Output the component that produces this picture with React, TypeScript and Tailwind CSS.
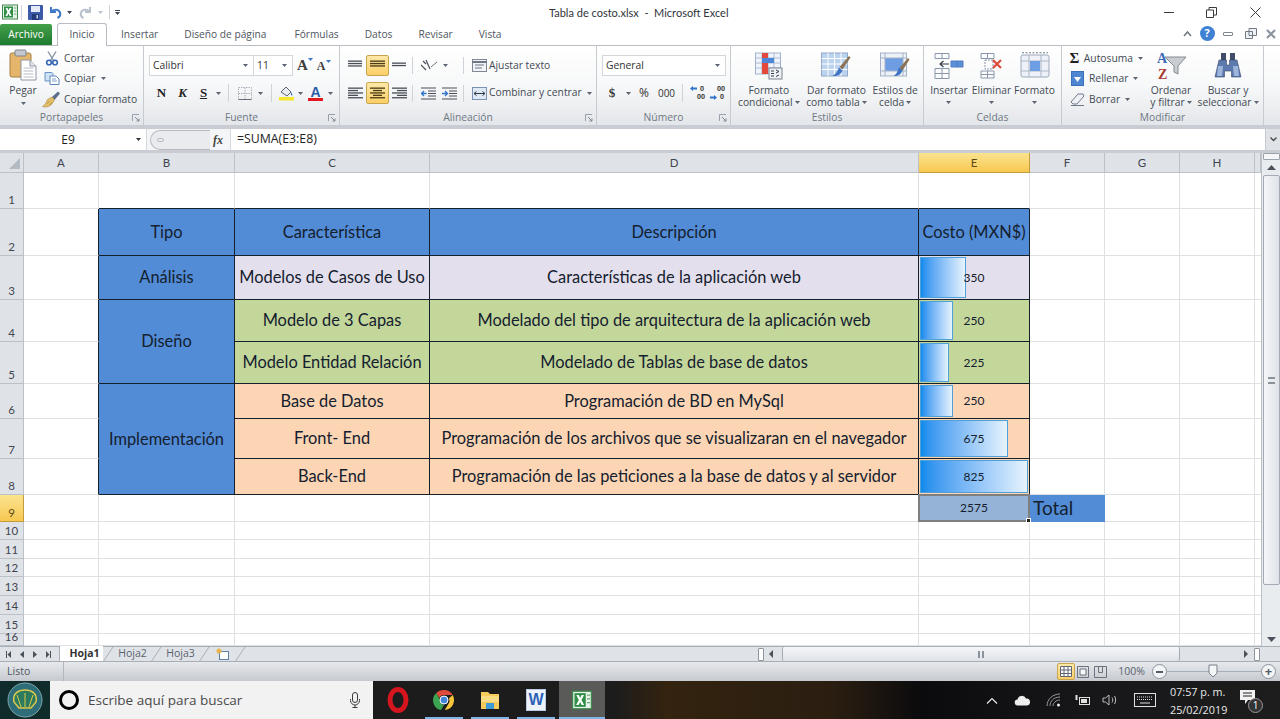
import type { ReactNode } from 'react';

const ui = "font-['Open_Sans','Noto_Sans',sans-serif]";
const sheet = "font-['Lato','Open_Sans',sans-serif]";

function Caret({ className = 'fill-[#5b6470]' }: { className?: string }) {
  return (
    <svg width="5" height="3" viewBox="0 0 5 3" className={`${className} shrink-0`}>
      <path d="M0 0h5L2.500 3z" />
    </svg>
  );
}

function ExcelIcon({ size = 16 }: { size?: number }) {
  return (
    <svg width={size} height={size} viewBox="0 0 16 16">
      <rect x="0.500" y="1" width="15" height="14" fill="#e8f3ea" stroke="#3f8a4d" />
      <rect x="2" y="2.500" width="9" height="11" fill="#2f8f46" />
      <path d="M3.500 4h2l1 2.300L7.600 4h2L7.600 8l2.100 4h-2L6.500 9.600 5.300 12h-2l2.100-4z" fill="#fff" />
      <path d="M12 4h2.500M12 7h2.500M12 10h2.500" stroke="#69ac78" />
    </svg>
  );
}

function LinesIcon({ lines, active = false }: { lines: [number, number][]; active?: boolean }) {
  return (
    <svg width="15" height="12" viewBox="0 0 15 12">
      {lines.map(([x, w], i) => (
        <rect key={i} x={x} y={i * 2.4 + 0.5} width={w} height="1.300" fill={active ? '#4a3a16' : '#4a4f57'} />
      ))}
    </svg>
  );
}

function IndentIcon({ flip = false }: { flip?: boolean }) {
  return (
    <svg width="15" height="13" viewBox="0 0 15 13" fill="none">
      <path d="M0 1h15M7 4h8M7 6.500h8M7 9h8M0 12h15" stroke="#4a4f57" strokeWidth="1.200" />
      <path d={flip ? 'M0 6.500h5M3 4l2.500 2.500L3 9' : 'M5.500 6.500h-5M3 4L.5 6.500 3 9'} stroke="#2f74c9" strokeWidth="1.300" />
    </svg>
  );
}

function ActiveBox({ children, className = '' }: { children: ReactNode; className?: string }) {
  return (
    <div className={`flex items-center justify-center rounded-[2px] border border-[#c9a552] bg-gradient-to-b from-[#fde8a6] to-[#fbcf66] ${className}`}>
      {children}
    </div>
  );
}

function ScissorsIcon() {
  return (
    <svg width="14" height="15" viewBox="0 0 14 15" fill="none">
      <path d="M3 0.500l5.500 9M11 0.500L5.500 9.500" stroke="#8a94a3" strokeWidth="1.400" />
      <circle cx="4" cy="11.500" r="2.300" stroke="#3565b5" strokeWidth="1.600" />
      <circle cx="10" cy="11.500" r="2.300" stroke="#3565b5" strokeWidth="1.600" />
    </svg>
  );
}

function CopyIcon() {
  return (
    <svg width="16" height="13" viewBox="0 0 16 13">
      <path d="M1 .5h7l1 1V9H1z" fill="#cfe2f6" stroke="#6b94c4" />
      <path d="M6 4h6l3 3v5.500H6z" fill="#fff" stroke="#5c86bb" />
      <path d="M8 7h4M8 9h5" stroke="#7ea5d0" />
    </svg>
  );
}

function BrushIcon() {
  return (
    <svg width="19" height="17" viewBox="0 0 19 17">
      <path d="M10 6l6-5.500 2 2L12.500 9z" fill="#5b6f8d" />
      <path d="M10 6l2.500 3-3 4.500C7 16 3 16.500.5 15.500 3 14 4.500 11 5.500 8.500z" fill="#e5c06a" stroke="#a98637" strokeWidth=".6" />
      <path d="M5 13l2.500-3M8 14l2-3" stroke="#a98637" strokeWidth=".7" />
    </svg>
  );
}

function PasteIcon() {
  return (
    <svg width="28" height="32" viewBox="0 0 28 32">
      <rect x="1" y="4" width="21" height="24" rx="2" fill="#e4b56a" stroke="#a57e42" />
      <rect x="6" y="1" width="11" height="6" rx="1" fill="#c5c9cf" stroke="#7f858d" />
      <path d="M12 11h9l6 6v14H12z" fill="#fff" stroke="#8d97a5" />
      <path d="M21 11v6h6" fill="#e5e9ee" stroke="#8d97a5" />
      <path d="M14.500 19h10M14.500 22h10M14.500 25h10M14.500 28h10" stroke="#b6bdc8" />
    </svg>
  );
}

function CondFormatIcon() {
  return (
    <svg width="28" height="28" viewBox="0 0 28 28">
      <rect x="0.500" y="1" width="25" height="21" fill="#f1f5fb" stroke="#9fb3cc" />
      <path d="M.5 6h25M.5 11h25M.5 16h25M7 1v21M13 1v21M19 1v21" stroke="#a9bcd4" />
      <rect x="7" y="1" width="6" height="21" fill="#e2493c" />
      <rect x="7" y="6" width="12" height="5" fill="#4d86d8" />
      <rect x="14" y="16" width="13" height="11" fill="#eef1f5" stroke="#7c8492" />
      <path d="M16 19h3M16 21.500h3M16 24h3M21 18l3 1.500-3 1.500M24 23l-3 1.500" stroke="#333a46" fill="none" />
    </svg>
  );
}

function TableFormatIcon() {
  return (
    <svg width="30" height="28" viewBox="0 0 30 28">
      <rect x="0.500" y="1" width="26" height="23" fill="#bcd3f0" stroke="#8fa8c8" />
      <path d="M.5 6.500h26M.5 12h26M.5 17.500h26M7 1v23M13.500 1v23M20 1v23" stroke="#fff" />
      <path d="M28 4l1.500 1.500-8 12-3-2.500z" fill="#8b7355" />
      <path d="M18 15.500l3.500 3c-1.500 4-6 6-10 5.500 3-1.500 5-4.500 6.500-8.500z" fill="#3f74c4" />
    </svg>
  );
}

function CellStyleIcon() {
  return (
    <svg width="30" height="28" viewBox="0 0 30 28">
      <rect x="0.500" y="1" width="26" height="23" fill="#eef2f7" stroke="#a3b2c6" />
      <rect x="5" y="6" width="18" height="13" fill="#6f9de4" />
      <path d="M.5 6h26M.5 19h26M5 1v23M23 1v23" stroke="#a3b2c6" />
      <path d="M28 6l1.500 1.500-7 11-3-2.500z" fill="#8b7355" />
      <path d="M19 15.500l3.500 3c-1.500 4-5 6-9 5.500 3-1.500 4-4.500 5.500-8.500z" fill="#3f74c4" />
    </svg>
  );
}

function InsertIcon() {
  return (
    <svg width="30" height="26" viewBox="0 0 30 26" fill="none">
      <path d="M1 .5h14v5H1zM8 .5v5M1 15.500h14v10H1zM8 15.500v10M1 20.500h14" stroke="#8b98a9" fill="#fbfcfd" />
      <path d="M17 8h12v6H17zM23 8v6" fill="#5d8fd9" stroke="#4c7cc2" />
      <path d="M15 11H6M9.500 8L6 11l3.500 3" stroke="#2f3844" strokeWidth="1.100" />
    </svg>
  );
}

function DeleteIcon() {
  return (
    <svg width="24" height="26" viewBox="0 0 24 26" fill="none">
      <path d="M1 .5h13v5H1zM7.500 .5v5M1 18h13v7H1zM7.500 18v7M1 21.500h13" stroke="#8b98a9" fill="#fbfcfd" />
      <path d="M5 7h8v9H5z" stroke="#8b98a9" strokeDasharray="2 1" />
      <path d="M13 7l8 8M21 7l-8 8" stroke="#e04a3c" strokeWidth="2.200" />
    </svg>
  );
}

function FormatIcon() {
  return (
    <svg width="30" height="27" viewBox="0 0 30 27">
      <rect x="1" y="3" width="28" height="22" rx="2" fill="#eef2f8" stroke="#9aa8ba" />
      <path d="M9 3v22M21 3v22M1 9h28M1 19h28" stroke="#a9b6c7" />
      <rect x="10" y="9" width="10" height="10" fill="#6d9de3" />
      <path d="M2 .800h26" stroke="#6f7885" strokeDasharray="2 1.500" />
    </svg>
  );
}

function SortIcon() {
  return (
    <svg width="31" height="32" viewBox="0 0 31 32">
      <path d="M9 7l21 0-8 9v8l-4-2v-6z" fill="#c9ccd1" stroke="#858a92" />
      <text x="1" y="12.500" fontSize="14" fontWeight="700" fontFamily="Liberation Serif" fill="#3b6ab5">A</text>
      <text x="2" y="28.500" fontSize="14" fontWeight="700" fontFamily="Liberation Serif" fill="#a83a30">Z</text>
    </svg>
  );
}

function BinocularsIcon() {
  return (
    <svg width="28" height="26" viewBox="0 0 28 26">
      <path d="M7 0h5v8H7zM16 0h5v8h-5z" fill="#3e4e69" />
      <path d="M5 7h7.500v5h3V7H23l4 17h-9.500v-6h-7v6H1z" fill="#5d79ad" stroke="#37476a" strokeWidth=".6" />
      <path d="M4 13h5l-1 10H3zM19 13h5l1 10h-5z" fill="#9db5dc" />
    </svg>
  );
}

function SmallBtn({ icon, label, caret = false, iconBox = 'w-[19px]' }: { icon: ReactNode; label: string; caret?: boolean; iconBox?: string }) {
  return (
    <div className="flex h-[20.500px] items-center">
      <span className={`flex justify-center ${iconBox}`}>{icon}</span>
      <span className="ml-[3px] whitespace-nowrap">{label}</span>
      {caret && <span className="ml-[5px]"><Caret /></span>}
    </div>
  );
}

function BigBtn({ icon, lines, width, caretLine = false }: { icon: ReactNode; lines: string[]; width: string; caretLine?: boolean }) {
  return (
    <div className={`flex flex-col items-center ${width}`}>
      <div className="flex h-[35px] items-center justify-center">{icon}</div>
      <div className="mt-[1px] whitespace-nowrap text-center leading-[12px]">
        {lines.map((l, i) => (
          <div key={l} className="flex h-[12px] items-center justify-center gap-[2px]">
            <span>{l}</span>
            {caretLine && i === lines.length - 1 && <Caret />}
          </div>
        ))}
        {lines.length === 1 && (
          <div className="flex h-[12px] items-center justify-center"><Caret /></div>
        )}
      </div>
    </div>
  );
}

function Launcher() {
  return (
    <svg width="8" height="8" viewBox="0 0 8 8" fill="none" className="shrink-0">
      <path d="M.5 7V.5H7" stroke="#98a1ad" />
      <path d="M3 3l4 4M4.500 7H7V4.500" stroke="#7d8794" />
    </svg>
  );
}

function Group({ label, width, launcher = false, children }: { label: string; width: string; launcher?: boolean; children: ReactNode }) {
  return (
    <div className={`flex h-full shrink-0 flex-col border-r border-[#c6cbd2] ${width}`}>
      <div className="h-[65px]">{children}</div>
      <div className="relative flex h-[14px] items-center justify-center text-[#6f7883]">
        {label}
        {launcher && <span className="absolute right-[3px] top-[3px] flex"><Launcher /></span>}
      </div>
    </div>
  );
}

function Sep({ className = 'h-[16px]' }: { className?: string }) {
  return <span className={`w-px bg-[#cfd3d9] ${className}`} />;
}

function TitleBar() {
  return (
    <div className="relative flex h-[24px] items-center bg-white pl-[2px]">
      <ExcelIcon />
      <Sep className="ml-[3px] h-[15px]" />
      <svg width="15" height="15" viewBox="0 0 15 15" className="ml-[6px]">
        <rect width="15" height="15" rx="1" fill="#3d5aa8" />
        <rect x="3" y="1" width="9" height="6" fill="#e4ebf7" />
        <rect x="4" y="9" width="7" height="6" fill="#223a7a" />
        <rect x="8.500" y="10" width="1.500" height="3.500" fill="#cbd5ea" />
      </svg>
      <svg width="13" height="13" viewBox="0 0 13 13" className="ml-[6px]" fill="none">
        <path d="M2 1v5h5" stroke="#3f78c6" strokeWidth="2" />
        <path d="M2.500 5.500C5 3 9.500 3 11 6.500c.8 2.500-.5 4.500-2.500 5.500" stroke="#3f78c6" strokeWidth="2" />
      </svg>
      <span className="ml-[5px]"><Caret className="fill-[#3d4550]" /></span>
      <svg width="13" height="13" viewBox="0 0 13 13" className="ml-[7px]" fill="none">
        <path d="M11 1v5H6" stroke="#b9c1cb" strokeWidth="2" />
        <path d="M10.500 5.500C8 3 3.500 3 2 6.500c-.8 2.500.5 4.500 2.500 5.500" stroke="#b9c1cb" strokeWidth="2" />
      </svg>
      <span className="ml-[6px]"><Caret className="fill-[#b9c1cb]" /></span>
      <Sep className="ml-[6px] h-[14px] bg-[#8d939b]" />
      <span className="ml-[5px] flex flex-col gap-[1px]">
        <span className="h-px w-[5px] bg-[#3d4550]" />
        <Caret className="fill-[#3d4550]" />
      </span>
      <div className={`absolute left-[549px] top-[5px] whitespace-nowrap text-[11px] text-[#30343a] ${sheet}`}>
        Tabla de costo.xlsx&nbsp; -&nbsp; Microsoft Excel
      </div>
      <div className="ml-auto flex items-center">
        <span className="h-px w-[10px] bg-[#3a3a3a]" />
        <svg width="11" height="11" viewBox="0 0 11 11" fill="none" className="ml-[32px]">
          <path d="M.5 3h7v7.500h-7zM3 3V.5h7.500V8H8" stroke="#3a3a3a" />
        </svg>
        <svg width="11" height="11" viewBox="0 0 11 11" fill="none" className="ml-[33px] mr-[19px]">
          <path d="M.5.5l10 10M10.500.5l-10 10" stroke="#3a3a3a" />
        </svg>
      </div>
    </div>
  );
}

function TabsRow() {
  const tabs: [string, string][] = [
    ['Insertar', 'ml-[14px]'],
    ['Diseño de página', 'ml-[26px]'],
    ['Fórmulas', 'ml-[28px]'],
    ['Datos', 'ml-[26px]'],
    ['Revisar', 'ml-[26px]'],
    ['Vista', 'ml-[26px]'],
  ];
  return (
    <div className={`flex h-[22px] items-end border-b border-[#b8bdc4] bg-white text-[10.200px] text-[#4e5560] ${ui}`}>
      <div className="flex h-[21px] w-[52px] items-center justify-center rounded-t-[2px] bg-gradient-to-b from-[#45a04a] to-[#1c7a30] text-white">Archivo</div>
      <div className="z-10 ml-[5px] -mb-px flex h-[23px] w-[50px] items-center justify-center rounded-t-[3px] border border-b-0 border-[#b8bdc4] bg-white">Inicio</div>
      {tabs.map(([t, m]) => (
        <span key={t} className={`${m} h-[19px] leading-[16px] whitespace-nowrap`}>{t}</span>
      ))}
      <div className="ml-auto mb-[4px] flex items-center">
        <svg width="9" height="7" viewBox="0 0 9 7" fill="none"><path d="M1 6l3.500-4L8 6" stroke="#6f7883" strokeWidth="1.500" /></svg>
        <span className="ml-[8px] flex h-[15px] w-[15px] items-center justify-center rounded-full bg-[#3f82d4] text-[11px] font-bold text-white">?</span>
        <span className="ml-[8.500px] h-[4px] w-[10px] rounded-[1px] border border-[#7d8692]" />
        <svg width="12" height="11" viewBox="0 0 12 11" fill="#eef1f5" stroke="#6f7883" className="ml-[12px]">
          <path d="M4 .5h7.500v7H4zM.5 3.500h7v7h-7z" />
        </svg>
        <svg width="10" height="10" viewBox="0 0 10 10" fill="none" className="ml-[9px] mr-[4px]">
          <path d="M1 1l8 8M9 1L1 9" stroke="#8c949f" strokeWidth="2.200" />
        </svg>
      </div>
    </div>
  );
}

function Combo({ text, width }: { text: string; width: string }) {
  return (
    <div className={`flex h-[21px] items-center justify-between border border-[#d3d7dc] bg-white pl-[3px] pr-[5px] text-[#333] ${width}`}>
      <span>{text}</span>
      <Caret />
    </div>
  );
}

function DecimalIcon({ top, bottom, arrowRow, topPad, bottomPad }: { top: string; bottom: string; arrowRow: 'top' | 'bottom'; topPad: string; bottomPad: string }) {
  return (
    <span className="relative flex h-[16px] w-[17px] flex-col text-[7px] font-bold leading-[8px] text-[#444]">
      <span className={topPad}>{top}</span>
      <span className={bottomPad}>{bottom}</span>
      <svg width="7" height="5" viewBox="0 0 7 5" className={`absolute left-0 ${arrowRow === 'top' ? 'top-[1px]' : 'bottom-[1px]'}`}>
        <path d={arrowRow === 'top' ? 'M0 2.500L3 0v1.500h4v2H3V5z' : 'M7 2.500L4 0v1.500H0v2h4V5z'} fill="#2f74c9" />
      </svg>
    </span>
  );
}

function Ribbon() {
  return (
    <div className={`flex h-[79px] bg-gradient-to-b from-[#ffffff] via-[#f7f8f9] to-[#e3e6ea] text-[10.300px] text-[#434a54] ${ui}`}>
      <Group label="Portapapeles" width="w-[144px]" launcher>
        <div className="flex pt-[3px]">
          <div className="-mr-[4px] flex w-[46px] flex-col items-center">
            <PasteIcon />
            <span className="mt-[3px] leading-[12px]">Pegar</span>
            <span className="mt-[6px]"><Caret /></span>
          </div>
          <div className="-mt-px">
            <SmallBtn icon={<ScissorsIcon />} label="Cortar" />
            <SmallBtn icon={<CopyIcon />} label="Copiar" caret />
            <SmallBtn icon={<BrushIcon />} label="Copiar formato" />
          </div>
        </div>
      </Group>

      <Group label="Fuente" width="w-[196px]" launcher>
        <div className="pl-[5px] pt-[9px]">
          <div className="flex items-center">
            <Combo text="Calibri" width="w-[105px]" />
            <Combo text="11" width="w-[40px] -ml-px" />
            <span className="ml-[4px] flex text-[15px] font-bold leading-none text-[#3d3d3d] font-['Liberation_Serif',serif]">A<Caret className="fill-[#3f78c6]" /></span>
            <span className="ml-[4px] flex text-[12px] font-bold leading-none text-[#3d3d3d] font-['Liberation_Serif',serif]">A<Caret className="fill-[#3f78c6]" /></span>
          </div>
          <div className="mt-[6px] flex h-[22px] items-center pl-[2px] text-[13px] font-bold text-[#222] font-['Liberation_Serif',serif]">
            <span className="w-[21px] text-center">N</span>
            <span className="w-[21px] text-center italic">K</span>
            <span className="w-[21px] text-center underline">S</span>
            <span className="ml-[2px]"><Caret /></span>
            <Sep className="ml-[7px] h-[18px]" />
            <svg width="14" height="13" viewBox="0 0 14 13" fill="none" className="ml-[9px]">
              <path d="M.5.5h13v12H.5zM7 .5v12M.5 6.500h13" stroke="#a9b0b9" strokeDasharray="1.500 1" />
              <path d="M.5 12.500h13" stroke="#68707c" />
            </svg>
            <span className="ml-[6px]"><Caret /></span>
            <Sep className="ml-[8px] h-[18px]" />
            <svg width="16" height="16" viewBox="0 0 16 16" className="ml-[7px]">
              <path d="M2 7l5-5 5 5-4 4z" fill="#e9edf2" stroke="#5d6672" />
              <path d="M12 7c1 1.500 2 3 1 3.500S11.500 9 12 7z" fill="#3f78c6" />
              <rect y="12" width="15" height="3.500" fill="#f7e62e" />
            </svg>
            <span className="ml-[3px]"><Caret /></span>
            <span className="ml-[5px] flex w-[15px] flex-col items-center">
              <span className="text-[14px] leading-[12px] text-[#2d5da8] font-['Liberation_Sans',sans-serif]">A</span>
              <span className="h-[3px] w-[15px] bg-[#e3181f]" />
            </span>
            <span className="ml-[5px]"><Caret /></span>
          </div>
        </div>
      </Group>

      <Group label="Alineación" width="w-[257px]" launcher>
        <div className="pl-[8px] pt-[9px]">
          <div className="flex h-[21px] items-center">
            <LinesIcon lines={[[0, 14], [0, 14], [0, 14]]} />
            <ActiveBox className="ml-[3px] h-[21px] w-[23px]"><LinesIcon active lines={[[0, 15], [0, 15], [0, 15]]} /></ActiveBox>
            <span className="ml-[3px] mt-[5px] flex"><LinesIcon lines={[[0, 14], [0, 14]]} /></span>
            <Sep className="ml-[5px] h-[17px]" />
            <svg width="21" height="14" viewBox="0 0 21 14" fill="none" className="ml-[8px]">
              <path d="M2 2l3 3M0 6l5 5M5 1l4 9" stroke="#4a4f57" strokeWidth="1.200" />
              <path d="M10 8l6-5" stroke="#6b7480" />
            </svg>
            <span className="ml-[1px]"><Caret /></span>
            <Sep className="ml-[15px] h-[17px]" />
            <svg width="15" height="13" viewBox="0 0 15 13" fill="none" className="ml-[8px]">
              <rect x=".5" y=".5" width="14" height="12" fill="#f2f4f7" stroke="#7f8894" />
              <path d="M.5 3h14" stroke="#6c7683" strokeWidth="2" />
              <path d="M3 6h9M3 9h7" stroke="#6c7683" />
            </svg>
            <span className="ml-[2px] whitespace-nowrap">Ajustar texto</span>
          </div>
          <div className="mt-[6px] flex h-[22px] items-center">
            <LinesIcon lines={[[0, 15], [0, 10], [0, 15], [0, 10], [0, 15]]} />
            <ActiveBox className="ml-[3px] h-[22px] w-[23px]"><LinesIcon active lines={[[0, 15], [3, 9], [0, 15], [3, 9], [0, 15]]} /></ActiveBox>
            <span className="ml-[3px] flex"><LinesIcon lines={[[0, 15], [5, 10], [0, 15], [5, 10], [0, 15]]} /></span>
            <Sep className="ml-[5px] h-[17px]" />
            <span className="ml-[8px] flex"><IndentIcon /></span>
            <span className="ml-[6px] flex"><IndentIcon flip /></span>
            <Sep className="ml-[6px] h-[17px]" />
            <svg width="15" height="13" viewBox="0 0 15 13" fill="none" className="ml-[8px]">
              <rect x=".5" y=".5" width="14" height="12" fill="#dfe9f6" stroke="#7b93b3" />
              <path d="M2 6.500h11M4.500 4.500l-2.500 2 2.500 2M10.500 4.500l2.500 2-2.500 2" stroke="#2f3844" />
            </svg>
            <span className="ml-[2px] whitespace-nowrap">Combinar y centrar</span>
            <span className="ml-[5px]"><Caret /></span>
          </div>
        </div>
      </Group>

      <Group label="Número" width="w-[134px]" launcher>
        <div className="pl-[5px] pt-[9px]">
          <Combo text="General" width="w-[124px]" />
          <div className="mt-[6px] flex h-[22px] items-center text-[#333]">
            <span className="ml-[4px] w-[12px] text-center text-[13px] font-bold font-['Liberation_Serif',serif]">$</span>
            <span className="ml-[8px]"><Caret /></span>
            <span className="ml-[8px] text-[12px]">%</span>
            <span className="ml-[9px] text-[10px]">000</span>
            <Sep className="ml-[7px] h-[18px]" />
            <span className="ml-[7px] flex"><DecimalIcon top="0" bottom="00" arrowRow="top" topPad="pl-[10px]" bottomPad="pl-[7px]" /></span>
            <span className="ml-[3px] flex"><DecimalIcon top="00" bottom="0" arrowRow="bottom" topPad="pl-[7px]" bottomPad="pl-[10px]" /></span>
          </div>
        </div>
      </Group>

      <Group label="Estilos" width="w-[193px]">
        <div className="flex pl-[1px] pt-[2px]">
          <BigBtn width="w-[74px]" icon={<CondFormatIcon />} lines={['Formato', 'condicional']} caretLine />
          <BigBtn width="w-[62px]" icon={<TableFormatIcon />} lines={['Dar formato', 'como tabla']} caretLine />
          <BigBtn width="w-[56px]" icon={<CellStyleIcon />} lines={['Estilos de', 'celda']} caretLine />
        </div>
      </Group>

      <Group label="Celdas" width="w-[138px]">
        <div className="flex pl-[3px] pt-[2px]">
          <BigBtn width="w-[44px]" icon={<InsertIcon />} lines={['Insertar']} />
          <BigBtn width="w-[41px]" icon={<DeleteIcon />} lines={['Eliminar']} />
          <BigBtn width="w-[45px]" icon={<FormatIcon />} lines={['Formato']} />
        </div>
      </Group>

      <Group label="Modificar" width="w-[202px]">
        <div className="flex pl-[6px] pt-[2px]">
          <div className="w-[75px]">
            <SmallBtn iconBox="w-[18px]" icon={<span className="text-[15px] font-bold leading-none text-[#222] font-['Liberation_Serif',serif]">Σ</span>} label="Autosuma" caret />
            <SmallBtn iconBox="w-[18px]" icon={<svg width="13" height="15" viewBox="0 0 13 15"><rect x=".5" y=".5" width="12" height="14" fill="#4f86d1" stroke="#3b6fb7" /><path d="M3 6h7l-3.500 5z" fill="#fff" /></svg>} label="Rellenar" caret />
            <SmallBtn iconBox="w-[18px]" icon={<svg width="15" height="13" viewBox="0 0 15 13"><path d="M1 9l7-8h5l1 2-7 8H3z" fill="#eef1f6" stroke="#6f7b8b" /><path d="M1 12.500h13" stroke="#6f7b8b" /></svg>} label="Borrar" caret />
          </div>
          <BigBtn width="w-[56px]" icon={<SortIcon />} lines={['Ordenar', 'y filtrar']} caretLine />
          <BigBtn width="w-[58px]" icon={<BinocularsIcon />} lines={['Buscar y', 'seleccionar']} caretLine />
        </div>
      </Group>
    </div>
  );
}

function FormulaBar() {
  return (
    <div className={`flex h-[28px] border-b-[3px] border-t-[4px] border-[#c9cdd3] bg-[#fbfbfc] text-[#222] ${ui}`}>
      <div className="flex w-[147px] items-center border-r border-[#d5d8dd] bg-white">
        <span className="flex-1 text-center text-[12px]">E9</span>
        <span className="mr-[5px]"><Caret className="fill-[#333]" /></span>
      </div>
      <div className="flex w-[83px] items-center bg-[#f4f5f7] pl-[3px]">
        <div className="flex h-[20px] w-[60px] items-center rounded-l-full border border-r-0 border-[#b7bcc3] bg-[#e9ebee] pl-[6px]">
          <span className="h-[4px] w-[7px] rounded-full border border-[#b7bcc3]" />
        </div>
        <span className="ml-[3px] text-[12px] font-bold italic text-[#444] font-['Liberation_Serif',serif]">fx</span>
      </div>
      <div className="flex flex-1 items-center border-l border-[#d5d8dd] bg-white pl-[6px] text-[12.300px]">=SUMA(E3:E8)</div>
      <div className="flex w-[15px] items-center justify-center border-l border-[#c6cad0] bg-[#dfe3e8]">
        <svg width="7" height="5" viewBox="0 0 7 5" fill="none"><path d="M.5.5l3 3 3-3" stroke="#444" strokeWidth="1.300" /></svg>
      </div>
    </div>
  );
}

function ColHead({ label, active = false }: { label?: string; active?: boolean }) {
  return (
    <div className={`flex items-center justify-center border-b border-r text-[11.500px] ${active ? 'border-[#c59c3d] bg-gradient-to-b from-[#fbe38e] to-[#f8c84f] text-[#5c4a18]' : 'border-[#bcc1c8] bg-[#dfe3e8] text-[#3f4650]'}`}>
      {label}
    </div>
  );
}

function RowHead({ n, active = false }: { n: number; active?: boolean }) {
  return (
    <div className={`flex items-end justify-center border-b border-r text-[11.500px] leading-[16px] ${active ? 'border-[#c59c3d] bg-gradient-to-b from-[#fbe38e] to-[#f8c84f] text-[#5c4a18]' : 'border-[#bcc1c8] bg-[#dfe3e8] text-[#3f4650]'}`}>
      {n}
    </div>
  );
}

function Blank({ className = '' }: { className?: string }) {
  return <div className={`border-b border-r border-[#dfe0e3] ${className}`} />;
}

function Cell({ text, bg, className = '' }: { text: string; bg: string; className?: string }) {
  return (
    <div className={`flex items-center justify-center whitespace-nowrap border-b border-r border-[#16202b] text-[16.400px] text-[#14202e] ${bg} ${className}`}>
      {text}
    </div>
  );
}

function CostCell({ value, bar, bg }: { value: number; bar: number; bg: string }) {
  return (
    <div className={`relative flex items-center justify-center border-b border-r border-[#16202b] text-[12px] text-[#14202e] ${bg}`}>
      <div
        className="absolute bottom-[1px] left-[1px] top-[1px] border border-[#4f9fd8] bg-gradient-to-r from-[#0a8bed] to-[#e6f3fc]"
        style={{ width: bar }}
      />
      <span className="relative">{value}</span>
    </div>
  );
}

function Filler({ from = 'F' }: { from?: 'F' | 'G' }) {
  return (
    <>
      {from === 'F' && <Blank />}
      <Blank />
      <Blank />
      <Blank className="border-r-0" />
    </>
  );
}

const BLUE = 'bg-[#538cd6]';
const LILAC = 'bg-[#e4dfec]';
const GREEN = 'bg-[#c4d79b]';
const PEACH = 'bg-[#fcd5b4]';

function Sheet() {
  const edge = 'border-r-[#16202b]';
  const topEdge = 'border-b-[#16202b]';
  return (
    <div className={`grid h-[493px] flex-1 grid-cols-[24px_75px_136px_195px_489px_111px_75px_75px_75px_6px] grid-rows-[20px_36px_47px_44px_42px_42px_35px_40px_36px_27px_18px_19px_18px_19px_19px_19px_12px] overflow-hidden bg-white ${sheet}`}>
      <div className="flex items-end justify-end border-b border-r border-[#bcc1c8] bg-[#dfe3e8] p-[3px]">
        <span className="h-0 w-0 border-b-[11px] border-l-[11px] border-b-[#b4bac2] border-l-transparent" />
      </div>
      {['A', 'B', 'C', 'D'].map((c) => <ColHead key={c} label={c} />)}
      <ColHead label="E" active />
      {['F', 'G', 'H'].map((c) => <ColHead key={c} label={c} />)}
      <ColHead />

      <RowHead n={1} />
      <Blank />
      <Blank className={topEdge} />
      <Blank className={topEdge} />
      <Blank className={topEdge} />
      <Blank className={topEdge} />
      <Filler />

      <RowHead n={2} />
      <Blank className={edge} />
      <Cell text="Tipo" bg={BLUE} />
      <Cell text="Característica" bg={BLUE} />
      <Cell text="Descripción" bg={BLUE} />
      <Cell text="Costo (MXN$)" bg={BLUE} />
      <Filler />

      <RowHead n={3} />
      <Blank className={edge} />
      <Cell text="Análisis" bg={BLUE} />
      <Cell text="Modelos de Casos de Uso" bg={LILAC} />
      <Cell text="Características de la aplicación web" bg={LILAC} />
      <CostCell value={350} bar={46} bg={LILAC} />
      <Filler />

      <RowHead n={4} />
      <Blank className={edge} />
      <Cell text="Diseño" bg={BLUE} className="row-span-2" />
      <Cell text="Modelo de 3 Capas" bg={GREEN} />
      <Cell text="Modelado del tipo de arquitectura de la aplicación web" bg={GREEN} />
      <CostCell value={250} bar={33} bg={GREEN} />
      <Filler />

      <RowHead n={5} />
      <Blank className={edge} />
      <Cell text="Modelo Entidad Relación" bg={GREEN} />
      <Cell text="Modelado de Tablas de base de datos" bg={GREEN} />
      <CostCell value={225} bar={29} bg={GREEN} />
      <Filler />

      <RowHead n={6} />
      <Blank className={edge} />
      <Cell text="Implementación" bg={BLUE} className="row-span-3" />
      <Cell text="Base de Datos" bg={PEACH} />
      <Cell text="Programación de BD en MySql" bg={PEACH} />
      <CostCell value={250} bar={33} bg={PEACH} />
      <Filler />

      <RowHead n={7} />
      <Blank className={edge} />
      <Cell text="Front- End" bg={PEACH} />
      <Cell text="Programación de los archivos que se visualizaran en el navegador" bg={PEACH} />
      <CostCell value={675} bar={88} bg={PEACH} />
      <Filler />

      <RowHead n={8} />
      <Blank className={edge} />
      <Cell text="Back-End" bg={PEACH} />
      <Cell text="Programación de las peticiones a la base de datos y al servidor" bg={PEACH} />
      <CostCell value={825} bar={108} bg={PEACH} />
      <Filler />

      <RowHead n={9} active />
      <Blank />
      <Blank />
      <Blank />
      <Blank />
      <div className="relative -ml-px -mt-px flex items-center justify-center border-2 border-[#7f7f7f] bg-[#95b3d7] text-[12px] text-[#14202e]">
        2575
        <span className="absolute -bottom-[3px] -right-[3px] h-[5px] w-[5px] border border-white bg-[#222]" />
      </div>
      <div className="flex items-center bg-[#538cd6] pl-[3px] text-[19px] text-[#14202e]">Total</div>
      <Filler from="G" />

      {[10, 11, 12, 13, 14, 15, 16].map((n) => (
        <div key={n} className="contents">
          <RowHead n={n} />
          <Blank />
          <Blank />
          <Blank />
          <Blank />
          <Blank />
          <Filler />
        </div>
      ))}
    </div>
  );
}

function ScrollArrow({ dir }: { dir: 'up' | 'down' }) {
  return (
    <svg width="9" height="5" viewBox="0 0 9 5" className="fill-[#4a525c]">
      <path d={dir === 'up' ? 'M0 5h9L4.500 0z' : 'M0 0h9L4.500 5z'} />
    </svg>
  );
}

function VScroll() {
  return (
    <div className="flex w-[19px] flex-col items-center border-l border-[#bcc1c8] bg-[#e9ecef]">
      <div className="h-[7px] w-[17px] rounded-[1px] border border-[#9aa2ac] bg-[#f5f6f8]" />
      <div className="flex h-[15px] items-center"><ScrollArrow dir="up" /></div>
      <div className="flex h-[410px] w-[17px] items-center justify-center rounded-[2px] border border-[#a4abb4] bg-gradient-to-r from-[#f5f6f8] to-[#dfe3e8]">
        <span className="h-[7px] w-[7px] border-y-2 border-[#8a929c]" />
      </div>
      <div className="mt-auto flex h-[14px] items-center"><ScrollArrow dir="down" /></div>
    </div>
  );
}

function TabSlant() {
  return (
    <svg width="11" height="15" viewBox="0 0 11 15" fill="none" className="shrink-0"><path d="M0 15L10 0" stroke="#a8aeb6" /></svg>
  );
}

function SheetTabs() {
  return (
    <div className={`flex h-[16px] items-stretch border-b border-t border-[#a8aeb6] bg-[#dfe3e8] text-[10.500px] text-[#5a626d] ${ui}`}>
      <div className="flex w-[59px] items-center gap-[9px] pl-[6px]">
        <svg width="5" height="7" viewBox="0 0 5 7" className="fill-[#4a525c]"><path d="M5 0v7L1.500 3.500zM0 0h1v7H0z" /></svg>
        <svg width="4" height="7" viewBox="0 0 4 7" className="fill-[#4a525c]"><path d="M4 0v7L0 3.500z" /></svg>
        <svg width="4" height="7" viewBox="0 0 4 7" className="fill-[#4a525c]"><path d="M0 0v7l4-3.500z" /></svg>
        <svg width="5" height="7" viewBox="0 0 5 7" className="fill-[#4a525c]"><path d="M0 0v7l3.500-3.500zM4 0h1v7H4z" /></svg>
      </div>
      <div className="-mt-px flex w-[44px] items-center justify-center border-l border-[#a8aeb6] bg-white pl-[6px] font-bold text-[#333]">Hoja1</div>
      <TabSlant />
      <span className="flex w-[37px] items-center justify-center">Hoja2</span>
      <TabSlant />
      <span className="flex w-[37px] items-center justify-center">Hoja3</span>
      <TabSlant />
      <span className="flex w-[25px] items-center justify-center">
        <svg width="13" height="12" viewBox="0 0 13 12" fill="none">
          <rect x="3.500" y="3.500" width="9" height="8" fill="#fff" stroke="#5e7fa8" />
          <circle cx="3" cy="3" r="2.500" fill="#e9b44c" />
        </svg>
      </span>
      <TabSlant />
      <div className="ml-[512px] flex items-center">
        <span className="h-[13px] w-[6px] rounded-[1px] border border-[#8d949e] bg-white" />
        <span className="ml-[5px] h-0 w-0 border-y-[4px] border-r-[4px] border-y-transparent border-r-[#4a525c]" />
      </div>
      <div className="ml-[9px] flex w-[398px] items-center justify-center rounded-[2px] border-x border-[#a4abb4] bg-gradient-to-b from-[#f5f6f8] to-[#dfe3e8]">
        <span className="h-[7px] w-[6px] border-x-2 border-[#8a929c]" />
      </div>
      <div className="ml-auto mr-[20px] flex items-center">
        <span className="h-0 w-0 border-y-[4px] border-l-[4px] border-y-transparent border-l-[#4a525c]" />
        <span className="ml-[6px] h-[13px] w-[6px] rounded-[1px] border border-[#8d949e] bg-white" />
      </div>
    </div>
  );
}

function StatusBar() {
  return (
    <div className={`flex h-[19px] items-center bg-gradient-to-b from-[#e7e9ec] to-[#c6cad0] text-[10.500px] text-[#4e5560] ${ui}`}>
      <div className="flex h-full w-[64px] items-center border-r border-[#b3b8bf] pl-[7px]">Listo</div>
      <div className="ml-auto flex items-center pr-[4px]">
        <ActiveBox className="h-[17px] w-[18px]">
          <svg width="12" height="11" viewBox="0 0 12 11" fill="#fff" stroke="#5f6670"><path d="M.5.5h11v10H.5zM4 .5v10M8 .5v10M.5 4h11M.5 7.500h11" /></svg>
        </ActiveBox>
        <svg width="12" height="12" viewBox="0 0 12 12" fill="none" stroke="#6a727d" className="ml-[2px]"><path d="M.5.5h11v11H.5z" /><path d="M3 3h6v6H3z" fill="#f7f8fa" /></svg>
        <svg width="13" height="12" viewBox="0 0 13 12" fill="none" stroke="#6a727d" className="ml-[5px]"><path d="M.5.5h12v11H.5zM4.500.5v6h4v-6" /></svg>
        <span className="ml-[11px] text-[#5a626d]">100%</span>
        <span className="ml-[7px] flex h-[15px] w-[15px] items-center justify-center rounded-full border border-[#8c939d] bg-[#f2f4f6]"><span className="h-[2px] w-[7px] bg-[#555c66]" /></span>
        <svg width="94" height="15" viewBox="0 0 94 15">
          <path d="M0 7.500h94" stroke="#a9afb7" />
          <path d="M42 1h8v8l-4 4-4-4z" fill="#f4f6f8" stroke="#78808b" />
        </svg>
        <span className="flex h-[15px] w-[15px] items-center justify-center rounded-full border border-[#8c939d] bg-[#f2f4f6] text-[13px] font-bold leading-none text-[#555c66]">+</span>
      </div>
    </div>
  );
}

function TaskIcon({ children, active = false, running = false }: { children: ReactNode; active?: boolean; running?: boolean }) {
  return (
    <div className={`relative flex h-full w-[46px] items-center justify-center ${active ? 'bg-[#5a5a58]' : ''}`}>
      {children}
      {running && <span className={`absolute bottom-0 h-[2px] bg-[#7fb6e6] ${active ? 'left-0 right-0' : 'left-[4px] right-[4px]'}`} />}
    </div>
  );
}

function Taskbar() {
  return (
    <div className={`flex h-[38px] bg-[linear-gradient(90deg,#1c1c1c_0%,#1c1c1c_48%,#33230f_52%,#2b1e11_65%,#0b0b0d_72%,#17171a_85%,#1d1d1d_100%)] ${ui}`}>
      <div className="flex w-[50px] items-center justify-center bg-[#0f2b2a]">
        <svg width="36" height="36" viewBox="0 0 36 36">
          <circle cx="18" cy="18" r="17" fill="#2f6e78" stroke="#7fa6ad" />
          <path d="M7 20c-2-9 5-12 11-12s13 3 11 12l-5 6H12z" fill="#2e7a5e" stroke="#dcc84a" strokeWidth="1.500" />
          <path d="M18 25V11M14 25l-4-12M22 25l4-12" stroke="#dcc84a" />
        </svg>
      </div>
      <div className="flex w-[323px] items-center bg-[#f2f2f2] pl-[9px] pr-[13px]">
        <span className="h-[20px] w-[20px] rounded-full border-[3px] border-black" />
        <span className="ml-[9px] text-[13.500px] text-[#4a4a4a]">Escribe aquí para buscar</span>
        <svg width="10" height="16" viewBox="0 0 10 16" fill="none" stroke="#3a3a3a" className="ml-auto">
          <rect x="2.500" y=".5" width="5" height="10" rx="2.500" />
          <path d="M.5 7v1.500a4.500 4.500 0 009 0V7M5 13v2.500M2.500 15.500h5" />
        </svg>
      </div>
      <div className="flex h-full pl-[2px]">
        <TaskIcon>
          <svg width="22" height="26" viewBox="0 0 22 26" fill="none"><ellipse cx="11" cy="13" rx="8" ry="10.500" stroke="#d5161f" strokeWidth="5" /></svg>
        </TaskIcon>
        <TaskIcon running>
          <svg width="22" height="22" viewBox="0 0 22 22">
            <path d="M11 1a10 10 0 018.700 5H11a5 5 0 00-4.600 3L3.200 3.900A10 10 0 0111 1z" fill="#de4b3c" />
            <path d="M19.700 6A10 10 0 0111.800 21l3.500-6a5 5 0 00.500-5.500L19.700 6z" fill="#f6c53a" />
            <path d="M3.200 3.900L7 10.700A5 5 0 0011 16l-3 5A10 10 0 013.200 3.900z" fill="#3ca350" />
            <circle cx="11" cy="11" r="4" fill="#4285d9" stroke="#fff" />
          </svg>
        </TaskIcon>
        <TaskIcon running>
          <svg width="18" height="20" viewBox="0 0 18 20">
            <path d="M0 2h7l2 2h9v15H0z" fill="#f6cb5b" />
            <rect x="0" y="6" width="18" height="6" fill="#fbdc85" />
            <rect x="5" y="13" width="8" height="6" fill="#3f9bd8" />
          </svg>
        </TaskIcon>
        <TaskIcon running>
          <div className="flex h-[22px] w-[20px] items-center justify-center border border-[#b9cbe6] bg-[#eef3fb]">
            <span className="text-[16px] font-bold leading-none text-[#2b62b6] font-['Liberation_Sans',sans-serif]">W</span>
          </div>
        </TaskIcon>
        <TaskIcon running active><ExcelIcon size={20} /></TaskIcon>
      </div>
      <div className="ml-auto flex items-center text-[#e8e8e8]">
        <svg width="12" height="7" viewBox="0 0 12 7" fill="none" stroke="#e8e8e8" strokeWidth="1.200"><path d="M1 6.500l5-5 5 5" /></svg>
        <svg width="16" height="11" viewBox="0 0 16 11" fill="#eee" className="ml-[16px]"><path d="M4 10.500a3 3 0 01-.5-6A4.500 4.500 0 0112 3.500a3.500 3.500 0 011 7z" /></svg>
        <svg width="15" height="14" viewBox="0 0 15 14" fill="none" stroke="#9a9a9a" className="ml-[16px]"><path d="M1 13C1 6 7 1 14 1M4 13c0-5 4-9 10-9M7 13c0-3 3-6 7-6" /><circle cx="12.500" cy="12" r="1.500" fill="#eee" stroke="none" /></svg>
        <svg width="16" height="12" viewBox="0 0 16 12" fill="none" stroke="#e0e0e0" className="ml-[13px]"><rect x="5.500" y="3.500" width="10" height="7" /><rect x="7" y="5" width="6" height="4" fill="#e0e0e0" stroke="none" /><path d="M2.500 1v5" strokeWidth="2" /></svg>
        <svg width="17" height="12" viewBox="0 0 17 12" fill="none" stroke="#bdbdbd" className="ml-[12px]"><path d="M1 4v4h2.500L7 11V1L3.500 4zM10 3.500c1 1.500 1 3.500 0 5M12.500 2c1.500 2.500 1.500 5.500 0 8" /></svg>
        <svg width="22" height="14" viewBox="0 0 22 14" fill="none" stroke="#e0e0e0" className="ml-[15px]"><rect x=".5" y=".5" width="21" height="13" /><path d="M3 4h16M3 6.500h16" strokeDasharray="1 1" /><path d="M6 10h10" /></svg>
        <div className="ml-[14px] flex w-[58px] flex-col gap-[3px] text-[10.800px] leading-[15px]">
          <span className="whitespace-nowrap">07:57 p. m.</span>
          <span className="whitespace-nowrap">25/02/2019</span>
        </div>
        <div className="relative ml-[12px] mr-[24px] h-[20px] w-[16px]">
          <svg width="15" height="14" viewBox="0 0 15 14"><path d="M0 0h15v10H8l-3 4v-4H0z" fill="#f2f2f2" /><path d="M3 3h9M3 6h9" stroke="#222" /></svg>
          <span className="absolute -bottom-[3px] -right-[7px] flex h-[15px] w-[15px] items-center justify-center rounded-full border border-[#999] bg-[#333] text-[10px] text-white">1</span>
        </div>
      </div>
    </div>
  );
}

export default function App() {
  return (
    <div className="flex h-[719px] w-[1280px] flex-col overflow-hidden bg-white">
      <TitleBar />
      <TabsRow />
      <Ribbon />
      <FormulaBar />
      <div className="flex h-[493px]">
        <Sheet />
        <VScroll />
      </div>
      <SheetTabs />
      <StatusBar />
      <Taskbar />
    </div>
  );
}
